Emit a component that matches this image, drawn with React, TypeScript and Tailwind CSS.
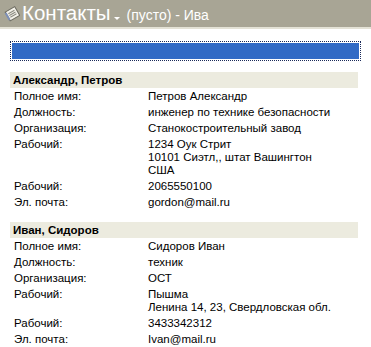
import React from "react";

type Row = { label: string; value: string[] };

const contacts: { name: string; rows: Row[] }[] = [
  {
    name: "Александр, Петров",
    rows: [
      { label: "Полное имя:", value: ["Петров Александр"] },
      { label: "Должность:", value: ["инженер по технике безопасности"] },
      { label: "Организация:", value: ["Станокостроительный завод"] },
      { label: "Рабочий:", value: ["1234 Оук Стрит", "10101 Сиэтл,, штат Вашингтон", "США"] },
      { label: "Рабочий:", value: ["2065550100"] },
      { label: "Эл. почта:", value: ["gordon@mail.ru"] },
    ],
  },
  {
    name: "Иван, Сидоров",
    rows: [
      { label: "Полное имя:", value: ["Сидоров Иван"] },
      { label: "Должность:", value: ["техник"] },
      { label: "Организация:", value: ["ОСТ"] },
      { label: "Рабочий:", value: ["Пышма", "Ленина 14, 23, Свердловская обл."] },
      { label: "Рабочий:", value: ["3433342312"] },
      { label: "Эл. почта:", value: ["Ivan@mail.ru"] },
    ],
  },
];

function ContactIcon() {
  return (
    <svg width="16" height="16" viewBox="0 0 16 16">
      <g transform="rotate(-30 8 8)">
        <rect x="3" y="3" width="11" height="10" fill="#f4f2ea" stroke="#6b6a60" strokeWidth="1" />
        <line x1="5" y1="6" x2="12" y2="6" stroke="#8a8a80" />
        <line x1="5" y1="8" x2="12" y2="8" stroke="#8a8a80" />
        <line x1="5" y1="10" x2="12" y2="10" stroke="#8a8a80" />
        <rect x="2" y="4" width="2" height="8" fill="#7c8fb8" />
      </g>
    </svg>
  );
}

export default function App() {
  return (
    <div
      className="w-[371px] h-[347px] overflow-hidden bg-white text-black"
      style={{ fontFamily: "'Liberation Sans', Arial, sans-serif" }}
    >
      <div className="h-[27px] bg-[#a8a595] flex items-center pl-[4px]">
        <ContactIcon />
        <span className="ml-[2px] text-white text-[20.5px] leading-none">Контакты</span>
        <span className="ml-[3px] mt-[10px] w-0 h-0 border-l-[3px] border-r-[3px] border-t-[3px] border-l-transparent border-r-transparent border-t-white" />
        <span className="ml-[7px] mt-[3px] text-white text-[14px] leading-none">(пусто) - Ива</span>
      </div>
      <div className="h-[2px] bg-[#e4e2d6]" />
      <div className="pt-[12px] pl-[10px] pr-[10px]">
        <div className="h-[20px] border border-dotted border-[#1a2a5a] p-[1px]">
          <div className="h-full bg-[#316ac5]" />
        </div>
      </div>
      <div className="pt-[11px] pl-[10px] pr-[13px] text-[11.5px]">
        {contacts.map((c, i) => (
          <div key={i} className={i > 0 ? "mt-[12px]" : ""}>
            <div className="h-[16px] leading-[16px] bg-[#ecebdf] pl-[3px] font-bold">{c.name}</div>
            {c.rows.map((r, j) => (
              <div key={j} className="flex pt-[2px] pb-[1px] leading-[13px]">
                <div className="w-[138px] pl-[4px] shrink-0">{r.label}</div>
                <div>
                  {r.value.map((v, k) => (
                    <div key={k}>{v}</div>
                  ))}
                </div>
              </div>
            ))}
          </div>
        ))}
      </div>
    </div>
  );
}
